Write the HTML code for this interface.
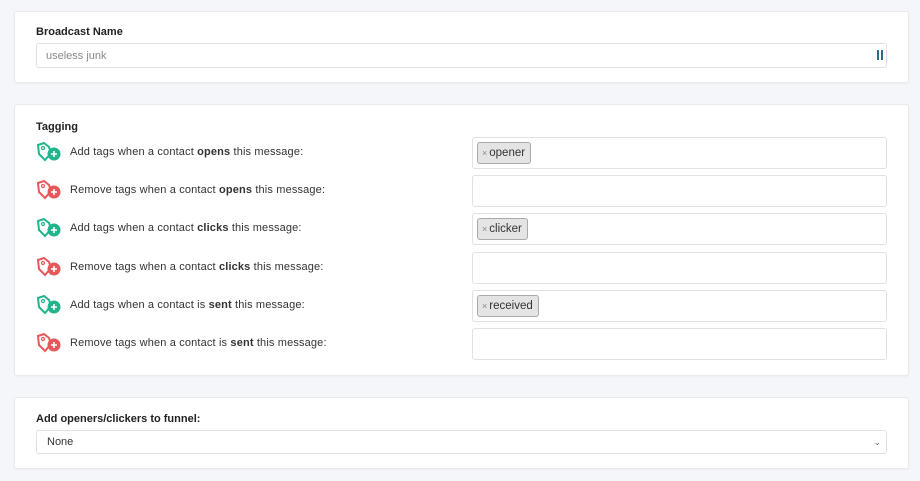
<!DOCTYPE html><html><head><style>
body{margin:0;width:920px;height:481px;background:#f5f6fa;font-family:"Liberation Sans",sans-serif;position:relative;overflow:hidden;color:#222}
.card{position:absolute;left:14px;width:893px;background:#fff;border:1px solid #e8e9ee;border-radius:3px;box-shadow:0 1px 2px rgba(0,0,0,.04)}
.a{position:absolute}
.lbl{font-weight:bold;font-size:11px;color:#222}
.inp{position:absolute;left:472px;width:413px;height:30px;border:1px solid #dfe1e5;border-radius:3px;background:#fff}
.tag{position:absolute;left:4px;top:4px;height:20px;border:1px solid #aaa;border-radius:3px;background:#e4e4e4;font-size:11.5px;line-height:20px;padding:0 5px 0 4px;color:#333}
.tag b{font-weight:normal;color:#888;font-size:9px;margin-right:2px}
.txt{position:absolute;left:70px;font-size:11px;color:#333;letter-spacing:0.15px}
.ic{position:absolute;left:36px}
</style></head><body>
<div class="card" style="top:11px;height:70px"></div>
<div class="a lbl" style="left:36px;top:26px">Broadcast Name</div>
<div class="a" style="left:36px;top:43px;width:849px;height:23px;border:1px solid #dfe1e5;border-radius:3px;font-size:11px;color:#888;line-height:25px;text-indent:9px">useless junk<span style="position:absolute;right:3px;top:6px;width:2px;height:10px;background:#2b6f86"></span><span style="position:absolute;right:7px;top:6px;width:2px;height:10px;background:#2b6f86"></span></div>

<div class="card" style="top:104px;height:270px"></div>
<div class="a lbl" style="left:36px;top:121px">Tagging</div>

<svg width="0" height="0" style="position:absolute"><defs>
<g id="tg"><path d="M2 3 L8 1 L13 5 L15 11 L9 18 L3 12 Z" fill="none" stroke-width="2"/><circle cx="7" cy="6" r="1.5" fill="none" stroke-width="1.2"/><circle cx="18" cy="12" r="6"/><path d="M18 9v6M15 12h6" stroke="#fff" stroke-width="1.6"/></g></defs></svg>

<svg class="ic" style="top:142px" width="26" height="20"><use href="#tg" fill="#22b58d" stroke="#22b58d"/></svg>
<div class="txt" style="top:146px">Add tags when a contact <b>opens</b> this message:</div>
<div class="inp" style="top:137px"><div class="tag"><b>×</b>opener</div></div>

<svg class="ic" style="top:180px" width="26" height="20"><use href="#tg" fill="#e8585a" stroke="#e8585a"/></svg>
<div class="txt" style="top:184px">Remove tags when a contact <b>opens</b> this message:</div>
<div class="inp" style="top:175px"></div>

<svg class="ic" style="top:218px" width="26" height="20"><use href="#tg" fill="#22b58d" stroke="#22b58d"/></svg>
<div class="txt" style="top:222px">Add tags when a contact <b>clicks</b> this message:</div>
<div class="inp" style="top:213px"><div class="tag"><b>×</b>clicker</div></div>

<svg class="ic" style="top:257px" width="26" height="20"><use href="#tg" fill="#e8585a" stroke="#e8585a"/></svg>
<div class="txt" style="top:261px">Remove tags when a contact <b>clicks</b> this message:</div>
<div class="inp" style="top:252px"></div>

<svg class="ic" style="top:295px" width="26" height="20"><use href="#tg" fill="#22b58d" stroke="#22b58d"/></svg>
<div class="txt" style="top:299px">Add tags when a contact is <b>sent</b> this message:</div>
<div class="inp" style="top:290px"><div class="tag"><b>×</b>received</div></div>

<svg class="ic" style="top:333px" width="26" height="20"><use href="#tg" fill="#e8585a" stroke="#e8585a"/></svg>
<div class="txt" style="top:337px">Remove tags when a contact is <b>sent</b> this message:</div>
<div class="inp" style="top:328px"></div>

<div class="card" style="top:397px;height:70px"></div>
<div class="a lbl" style="left:36px;top:413px">Add openers/clickers to funnel:</div>
<div class="a" style="left:36px;top:430px;width:849px;height:22px;border:1px solid #dfe1e5;border-radius:3px;font-size:11px;color:#333;line-height:23px;text-indent:10px">None<span style="position:absolute;right:5px;top:0;font-size:9px;color:#666">&#8964;</span></div>
</body></html>
